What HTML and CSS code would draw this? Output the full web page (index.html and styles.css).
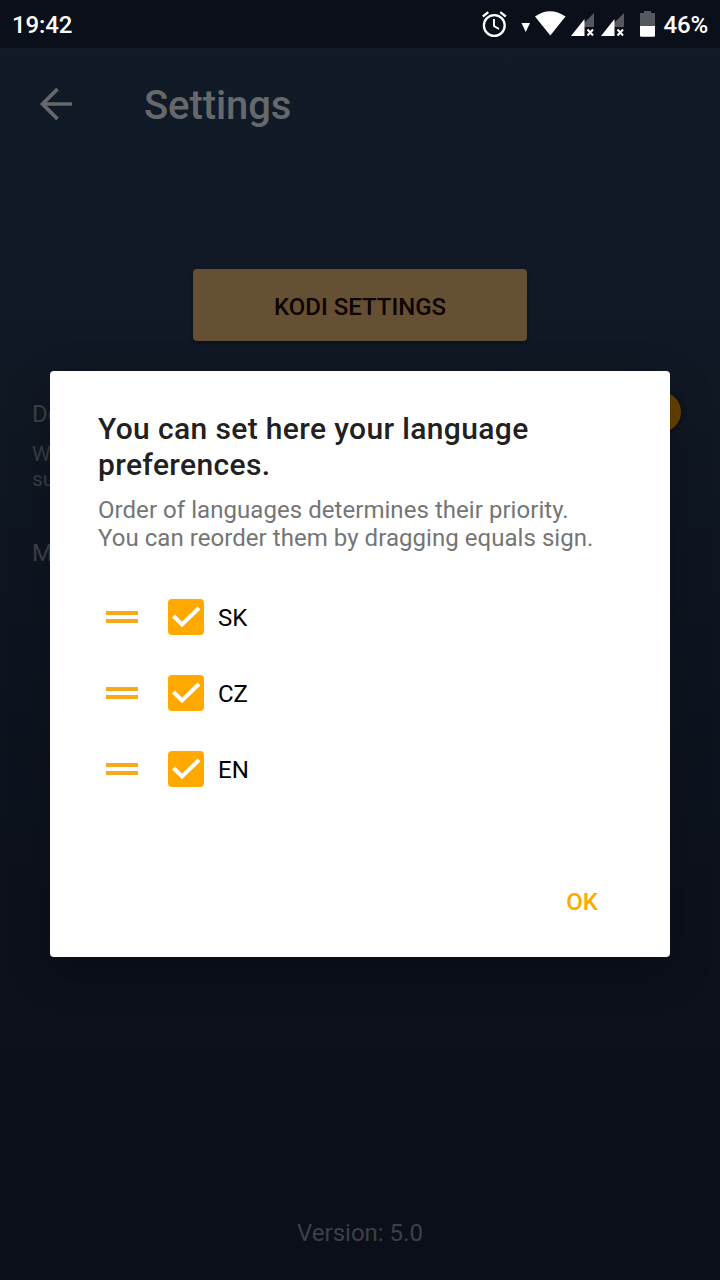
FILE: index.html
```html
<!DOCTYPE html>
<html lang="en">
<head>
<meta charset="utf-8">
<title>Settings</title>
<link rel="stylesheet" href="styles.css">
</head>
<body>
<div class="screen">
  <header class="status">
    <span class="clock">19:42</span>
    <svg class="status-icons" width="180" height="48" viewBox="480 0 180 48">
      <g fill="none" stroke="#fff" stroke-width="2.300">
        <circle cx="494.300" cy="25.500" r="10.400"/>
        <path d="M482.800 16.500l5.500-4.300M505.800 16.500l-5.500-4.300"/>
        <path d="M494 19v7l5 3" stroke-width="1.900"/>
      </g>
      <path fill="#fff" d="M521.500 23h8.500l-4.250 9zM535 16.500Q550 6 565.500 16.500L550.300 35.500z"/>
      <g id="signal">
        <path fill="#55585f" d="M594 13v14h-10v-4z"/>
        <path fill="#fff" d="M571 36l13.500-17v17z"/>
        <path d="M587.500 29.500l5.500 6m0-6l-5.500 6" stroke="#fff" stroke-width="2"/>
      </g>
      <use href="#signal" x="30"/>
      <path fill="#55585f" d="M644 11h7v2h4v13h-15V13h4z"/>
      <path fill="#fff" d="M640 26h15v9.500q0 1.300-1.300 1.300h-12.400q-1.300 0-1.300-1.300z"/>
    </svg>
    <span class="battery">46%</span>
  </header>
  <nav class="toolbar">
    <svg class="back" width="34" height="34" viewBox="0 0 34 34"><path d="M33 17H4M18.500 2L3.500 17l15 15" fill="none" stroke="#66686b" stroke-width="3.700"/></svg>
    <h1>Settings</h1>
  </nav>
  <main class="content">
    <button class="kodi">KODI SETTINGS</button>
    <div class="option">
      <div>
        <div class="option-name">De</div>
        <div class="option-note">W<br>su</div>
      </div>
      <span class="thumb"></span>
    </div>
    <div class="option-name option-last">M</div>
    <footer class="version">Version: 5.0</footer>
  </main>
  <section class="dialog">
    <h2>You can set here your language<br>preferences.</h2>
    <p>Order of languages determines their priority.<br>You can reorder them by dragging equals sign.</p>
    <ul class="languages">
      <li><span class="handle"></span><svg class="check" width="36" height="36" viewBox="0 0 36 36"><rect width="36" height="36" rx="4"/><path d="M5.500 17l8.500 8.500L31 9"/></svg><span>SK</span></li>
      <li><span class="handle"></span><svg class="check" width="36" height="36" viewBox="0 0 36 36"><rect width="36" height="36" rx="4"/><path d="M5.500 17l8.500 8.500L31 9"/></svg><span>CZ</span></li>
      <li><span class="handle"></span><svg class="check" width="36" height="36" viewBox="0 0 36 36"><rect width="36" height="36" rx="4"/><path d="M5.500 17l8.500 8.500L31 9"/></svg><span>EN</span></li>
    </ul>
    <button class="ok">OK</button>
  </section>
</div>
</body>
</html>
```
FILE: styles.css
```css
* { box-sizing: border-box; }
body { margin: 0; font-family: Roboto, sans-serif; }
h1, h2, p, ul { margin: 0; padding: 0; font-weight: 500; }
button { border: 0; padding: 0; font: 500 24px/28px Roboto, sans-serif; }
.screen {
  position: relative;
  display: flex;
  flex-direction: column;
  width: 720px;
  height: 1280px;
  overflow: hidden;
  background: linear-gradient(#111b27 48px, #101925 300px, #0c111b 900px, #0a0f1a 1280px);
}
.status {
  display: flex;
  align-items: center;
  height: 48px;
  padding: 2px 12px 0 12px;
  background: #0a0f1a;
  color: #fff;
  font-size: 24px;
  font-weight: 500;
  letter-spacing: -.15px;
}
.status-icons { margin: -2px 3px 0 auto; }
.toolbar {
  display: flex;
  align-items: center;
  height: 112px;
  padding-left: 39px;
}
.toolbar h1 {
  margin-left: 71px;
  padding-top: 4px;
  color: #66686b;
  font-size: 40px;
  line-height: 48px;
  letter-spacing: -.1px;
}
.content { flex: 1; display: flex; flex-direction: column; }
.kodi {
  align-self: center;
  width: 334px;
  height: 72px;
  margin-top: 109px;
  padding-top: 3px;
  border-radius: 4px;
  background: #665033;
  color: #0c0500;
  box-shadow: 0 1px 4px rgba(0, 0, 0, .35);
}
.option {
  display: flex;
  justify-content: space-between;
  padding: 51px 39px 0 32px;
}
.option-name { color: #3e4248; font-size: 24px; line-height: 44px; }
.option-note { color: #3a3e44; font-size: 21px; line-height: 25px; padding-top: 6px; }
.option-last { padding: 39px 0 0 32px; }
.thumb {
  width: 40px;
  height: 40px;
  border-radius: 50%;
  background: #664400;
  box-shadow: 0 1px 4px rgba(0, 0, 0, .5);
}
.version {
  margin: auto 0 33px;
  text-align: center;
  color: #3d4046;
  font-size: 24px;
  line-height: 28px;
}
.dialog {
  position: absolute;
  left: 50px;
  top: 371px;
  display: flex;
  flex-direction: column;
  width: 620px;
  height: 586px;
  padding: 40px 48px 41px;
  border-radius: 4px;
  background: #fff;
  box-shadow: 0 12px 40px rgba(0, 0, 0, .25);
}
.dialog h2 { color: #212121; font-size: 30px; line-height: 36px; letter-spacing: .36px; }
.dialog p {
  margin-top: 13px;
  color: #757575;
  font-size: 24px;
  font-weight: 400;
  line-height: 28px;
  letter-spacing: .05px;
}
.languages { list-style: none; margin-top: 27px; }
.languages li {
  display: flex;
  align-items: center;
  height: 76px;
  padding-left: 8px;
  color: #000;
  font-size: 24px;
}
.languages li > span:last-child { margin-left: 14px; padding-top: 2px; font-weight: 400; }
.handle { width: 32px; height: 12px; border: solid #f9a919; border-width: 4px 0; }
.check { margin-left: 30px; fill: #ffa800; }
.check path { fill: none; stroke: #fff; stroke-width: 4; }
.ok { align-self: flex-end; margin: auto 24px 0 0; background: none; color: #ffa800; }
```
